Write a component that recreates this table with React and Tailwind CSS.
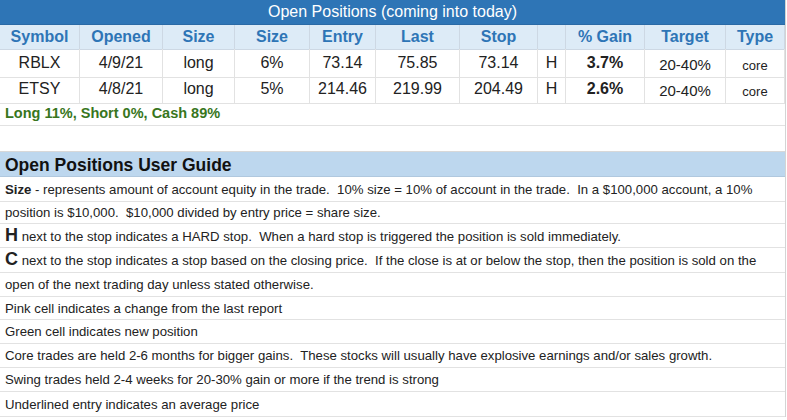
const cols =
  "grid grid-cols-[80px_83px_72px_75px_66px_84px_78px_28px_79px_81px_59px]";

const headers = ["Symbol", "Opened", "Size", "Size", "Entry", "Last", "Stop", "", "% Gain", "Target", "Type"];

const positions = [
  ["RBLX", "4/9/21", "long", "6%", "73.14", "75.85", "73.14", "H", "3.7%", "20-40%", "core"],
  ["ETSY", "4/8/21", "long", "5%", "214.46", "219.99", "204.49", "H", "2.6%", "20-40%", "core"],
];

const guideRows = [
  { h: "h-[25px]", body: (<><b>Size</b> - represents amount of account equity in the trade.  10% size = 10% of account in the trade.  In a $100,000 account, a 10%</>) },
  { h: "h-[22px]", body: "position is $10,000.  $10,000 divided by entry price = share size." },
  { h: "h-[24px]", body: (<><b className="text-[18px] leading-none">H</b> next to the stop indicates a HARD stop.  When a hard stop is triggered the position is sold immediately.</>) },
  { h: "h-[25px]", body: (<><b className="text-[18px] leading-none">C</b> next to the stop indicates a stop based on the closing price.  If the close is at or below the stop, then the position is sold on the</>) },
  { h: "h-[24px]", body: "open of the next trading day unless stated otherwise." },
  { h: "h-[23px]", body: "Pink cell indicates a change from the last report" },
  { h: "h-[24px]", body: "Green cell indicates new position" },
  { h: "h-[24px]", body: "Core trades are held 2-6 months for bigger gains.  These stocks will usually have explosive earnings and/or sales growth." },
  { h: "h-[24px]", body: "Swing trades held 2-4 weeks for 20-30% gain or more if the trend is strong" },
  { h: "h-[25px]", body: "Underlined entry indicates an average price" },
];

function cellClass(i) {
  if (i === 8) return "font-bold text-[16px]";
  if (i === 9) return "text-[15px] pt-[5px]";
  if (i === 10) return "text-[13px] pt-[5px]";
  return "text-[16px] pt-[1px]";
}

export default function App() {
  return (
    <div className="w-[787px] h-[420px] overflow-hidden bg-white font-['Liberation_Sans',Arial,sans-serif] text-[#222]">
      <div className="w-[786px] border-r border-[#d4d4d4]">
        <div className="h-[25px] bg-[#2e75b6] text-white text-[16px] flex items-center justify-center border-b border-[#2a6aa6]">
          Open Positions (coming into today)
        </div>

        <div className={`${cols} h-[24px] bg-[#ddebf7] text-[#2e75b6] font-bold text-[16px]`}>
          {headers.map((h, i) => (
            <div key={i} className="flex items-center justify-center border-r border-b border-[#cdd8e4]">
              {h}
            </div>
          ))}
        </div>

        {positions.map((row, r) => (
          <div key={r} className={`${cols} ${r === 0 ? "h-[26px]" : "h-[25px]"}`}>
            {row.map((v, i) => (
              <div key={i} className={`flex items-center justify-center border-r border-b border-[#e2e2e2] ${cellClass(i)}`}>
                {v}
              </div>
            ))}
          </div>
        ))}

        <div className="h-[26px] flex items-center px-[5px] pt-[3px] border-b border-[#e2e2e2] text-[#38761d] font-bold text-[14.5px]">
          Long 11%, Short 0%, Cash 89%
        </div>
        <div className="h-[26px] border-b border-[#d8d8d8]" />

        <div className="h-[25px] bg-[#bdd7ee] flex items-center px-[5px] pt-[2px] font-bold text-[17.5px] text-[#111] border-b border-[#b0c8de]">
          Open Positions User Guide
        </div>

        {guideRows.map((g, i) => (
          <div key={i} className={`${g.h} flex items-center px-[5px] pt-[1px] border-b border-[#e2e2e2] text-[13.2px] whitespace-pre text-[#222]`}>
            <span>{g.body}</span>
          </div>
        ))}
      </div>
    </div>
  );
}
